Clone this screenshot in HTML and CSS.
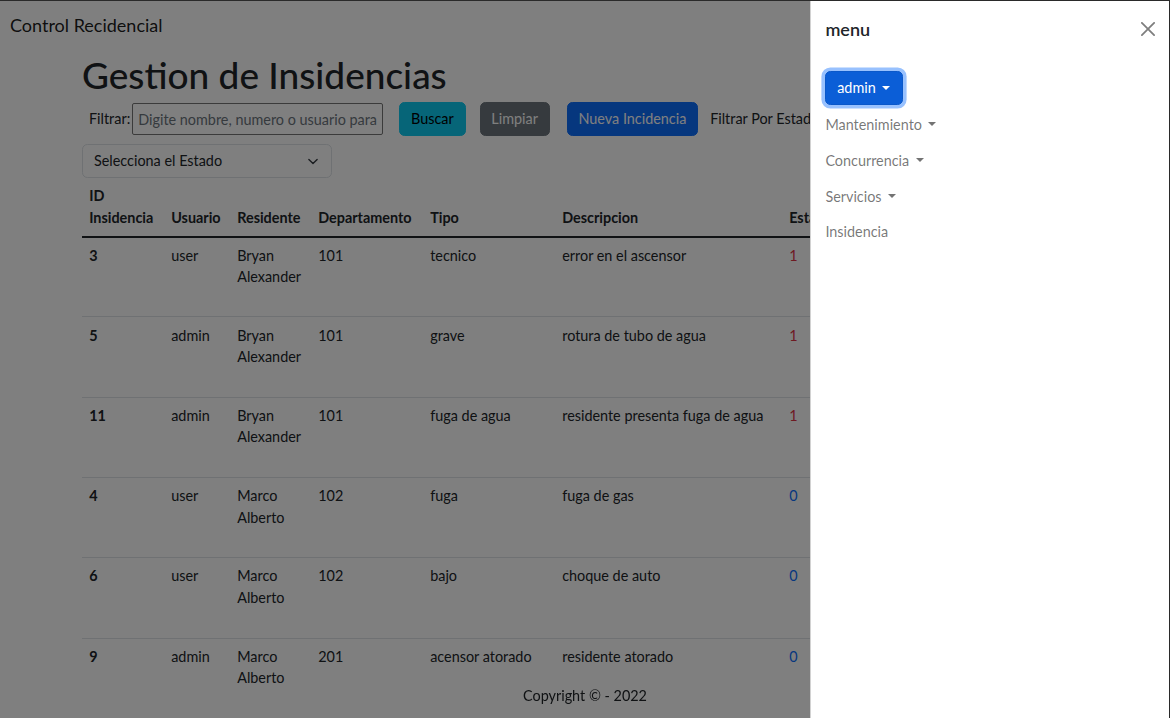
FILE: index.html
```html
<!DOCTYPE html>
<html lang="es">
<head>
<meta charset="utf-8">
<title>Gestion de Insidencias - Control Recidencial</title>
<link rel="stylesheet" href="styles.css">
</head>
<body>
<header class="navbar">
  <a class="brand" href="#">Control Recidencial</a>
</header>

<main class="container">
  <h1 class="title">Gestion de Insidencias</h1>

  <div class="toolbar">
    <label class="filter-label" for="q">Filtrar:</label>
    <input id="q" class="search" type="text" placeholder="Digite nombre, numero o usuario para buscar">
    <button class="btn btn-info gap-a">Buscar</button>
    <button class="btn btn-secondary gap-b">Limpiar</button>
    <button class="btn btn-primary gap-c">Nueva Incidencia</button>
    <span class="state-label">Filtrar Por Estado</span>
  </div>

  <div class="select">
    <span>Selecciona el Estado</span>
    <svg class="chev" viewBox="0 0 16 16" width="14" height="11" aria-hidden="true">
      <path d="M2 5l6 6 6-6" fill="none" stroke="#343a40" stroke-width="2" stroke-linecap="round" stroke-linejoin="round"/>
    </svg>
  </div>

  <table class="table">
    <colgroup>
      <col class="c-id"><col class="c-user"><col class="c-res"><col class="c-dep">
      <col class="c-tipo"><col class="c-desc"><col class="c-est"><col>
    </colgroup>
    <thead>
      <tr>
        <th>ID Insidencia</th><th>Usuario</th><th>Residente</th><th>Departamento</th>
        <th>Tipo</th><th>Descripcion</th><th>Estado</th><th>Acciones</th>
      </tr>
    </thead>
    <tbody>
      <tr><th>3</th><td>user</td><td>Bryan Alexander</td><td>101</td><td>tecnico</td><td>error en el ascensor</td><td class="st-1">1</td><td></td></tr>
      <tr><th>5</th><td>admin</td><td>Bryan Alexander</td><td>101</td><td>grave</td><td>rotura de tubo de agua</td><td class="st-1">1</td><td></td></tr>
      <tr><th>11</th><td>admin</td><td>Bryan Alexander</td><td>101</td><td>fuga de agua</td><td>residente presenta fuga de agua</td><td class="st-1">1</td><td></td></tr>
      <tr><th>4</th><td>user</td><td>Marco Alberto</td><td>102</td><td>fuga</td><td>fuga de gas</td><td class="st-0">0</td><td></td></tr>
      <tr><th>6</th><td>user</td><td>Marco Alberto</td><td>102</td><td>bajo</td><td>choque de auto</td><td class="st-0">0</td><td></td></tr>
      <tr><th>9</th><td>admin</td><td>Marco Alberto</td><td>201</td><td>acensor atorado</td><td>residente atorado</td><td class="st-0">0</td><td></td></tr>
    </tbody>
  </table>
</main>

<footer class="footer">Copyright © - 2022</footer>

<div class="backdrop"></div>

<aside class="offcanvas">
  <div class="oc-header">
    <h5 class="oc-title">menu</h5>
    <svg class="close" viewBox="0 0 16 16" width="14" height="14" aria-label="Close">
      <path d="M.293.293a1 1 0 0 1 1.414 0L8 6.586 14.293.293a1 1 0 1 1 1.414 1.414L9.414 8l6.293 6.293a1 1 0 0 1-1.414 1.414L8 9.414l-6.293 6.293a1 1 0 0 1-1.414-1.414L6.586 8 .293 1.707a1 1 0 0 1 0-1.414z" fill="#000"/>
    </svg>
  </div>
  <div class="oc-body">
    <div class="nav-item"><button class="admin caret">admin</button></div>
    <a class="nav-link caret" href="#">Mantenimiento</a>
    <a class="nav-link caret" href="#">Concurrencia</a>
    <a class="nav-link caret" href="#">Servicios</a>
    <a class="nav-link" href="#">Insidencia</a>
  </div>
</aside>

<div class="frame"></div>
</body>
</html>
```

FILE: styles.css
```css
* { box-sizing: border-box; }

html, body { margin: 0; height: 100%; }

body {
  font-family: Lato, "Noto Sans", sans-serif;
  font-size: 14.4px;
  line-height: 21.6px;
  color: #212529;
  background: #fff;
  overflow: hidden;
}

.navbar {
  height: 50px;
  display: flex;
  align-items: center;
  padding: 0 10px;
}

.brand {
  font-size: 18px;
  line-height: 27px;
  color: rgba(0, 0, 0, .9);
  text-decoration: none;
}

.container {
  margin-left: 82px;
  width: 1026px;
}

.title {
  font-size: 37px;
  line-height: 43px;
  font-weight: 500;
  margin: 3px 0 6px;
}

.toolbar {
  display: flex;
  align-items: center;
  height: 34px;
  padding-left: 7px;
}

.filter-label { margin-right: 2px; }

.search {
  width: 251px;
  height: 32px;
  border: 1px solid #767676;
  border-radius: 2px;
  padding: 1px 5px;
  font: inherit;
  color: #212529;
  background: #fff;
  margin-right: 16px;
}

.search::placeholder { color: #6c757d; }

.btn {
  font: inherit;
  padding: 5.4px 10.8px;
  border: 1px solid transparent;
  border-radius: 5.4px;
  cursor: pointer;
}

.gap-a { margin-right: 14px; }
.gap-b { margin-right: 17px; }
.gap-c { margin-right: 12px; }

.btn-info { background: #0dcaf0; border-color: #0dcaf0; color: #000; }
.btn-secondary { background: #6c757d; border-color: #6c757d; color: #fff; }
.btn-primary { background: #0d6efd; border-color: #0d6efd; color: #fff; }

.state-label { white-space: nowrap; }

.select {
  margin-top: 8px;
  width: 250px;
  height: 34px;
  border: 1px solid #dee2e6;
  border-radius: 5.4px;
  padding: 0 11px;
  display: flex;
  align-items: center;
  justify-content: space-between;
  background: #fff;
}

.table {
  width: 1026px;
  table-layout: fixed;
  border-collapse: collapse;
}

.c-id { width: 82px; }
.c-user { width: 66px; }
.c-res { width: 81px; }
.c-dep { width: 112px; }
.c-tipo { width: 132px; }
.c-desc { width: 227px; }
.c-est { width: 90px; }

.table th,
.table td {
  padding: 7.2px;
  text-align: left;
}

.table thead th {
  vertical-align: bottom;
  font-weight: 700;
  border-bottom: 2px solid #212529;
}

.table tbody tr { height: 80.3px; }

.table tbody th,
.table tbody td {
  vertical-align: top;
  border-bottom: 1px solid #dee2e6;
}

.table tbody th { font-weight: 700; }

.st-1 { color: #dc3545; }
.st-0 { color: #0d6efd; }

.footer {
  position: fixed;
  left: 0;
  right: 0;
  bottom: 0;
  height: 44px;
  line-height: 44px;
  text-align: center;
  color: #212529;
}

.backdrop {
  position: fixed;
  inset: 0;
  background: rgba(0, 0, 0, .5);
  z-index: 1040;
}

.offcanvas {
  position: fixed;
  top: 0;
  right: 0;
  bottom: 0;
  width: 360px;
  background: #fff;
  border-left: 1px solid rgba(0, 0, 0, .175);
  z-index: 1045;
  display: flex;
  flex-direction: column;
}

.oc-header {
  height: 58px;
  padding: 0 15px 0 14.4px;
  display: flex;
  align-items: center;
  justify-content: space-between;
}

.oc-title {
  margin: 0;
  font-size: 18px;
  line-height: 27px;
  font-weight: 600;
  color: #212529;
}

.close { opacity: .5; }

.oc-body {
  padding: 13px 14.4px 14.4px;
}

.nav-item { margin-bottom: 1px; }

.admin {
  font: inherit;
  color: #fff;
  background: #0b5ed7;
  border: 1px solid #0a58ca;
  border-radius: 5.4px;
  padding: 5.4px 11.8px 5.4px 10.8px;
  box-shadow: 0 0 0 3.6px rgba(49, 132, 253, .5);
}

.nav-link {
  display: block;
  padding: 7.2px 0;
  color: rgba(0, 0, 0, .55);
  text-decoration: none;
}

.caret::after {
  content: "";
  display: inline-block;
  margin-left: .45em;
  vertical-align: .255em;
  border-top: .3em solid;
  border-right: .3em solid transparent;
  border-left: .3em solid transparent;
}

.frame {
  position: fixed;
  inset: 0;
  border-top: 1px solid #2a2a2a;
  border-right: 1px solid #2a2a2a;
  pointer-events: none;
  z-index: 2000;
}
```
